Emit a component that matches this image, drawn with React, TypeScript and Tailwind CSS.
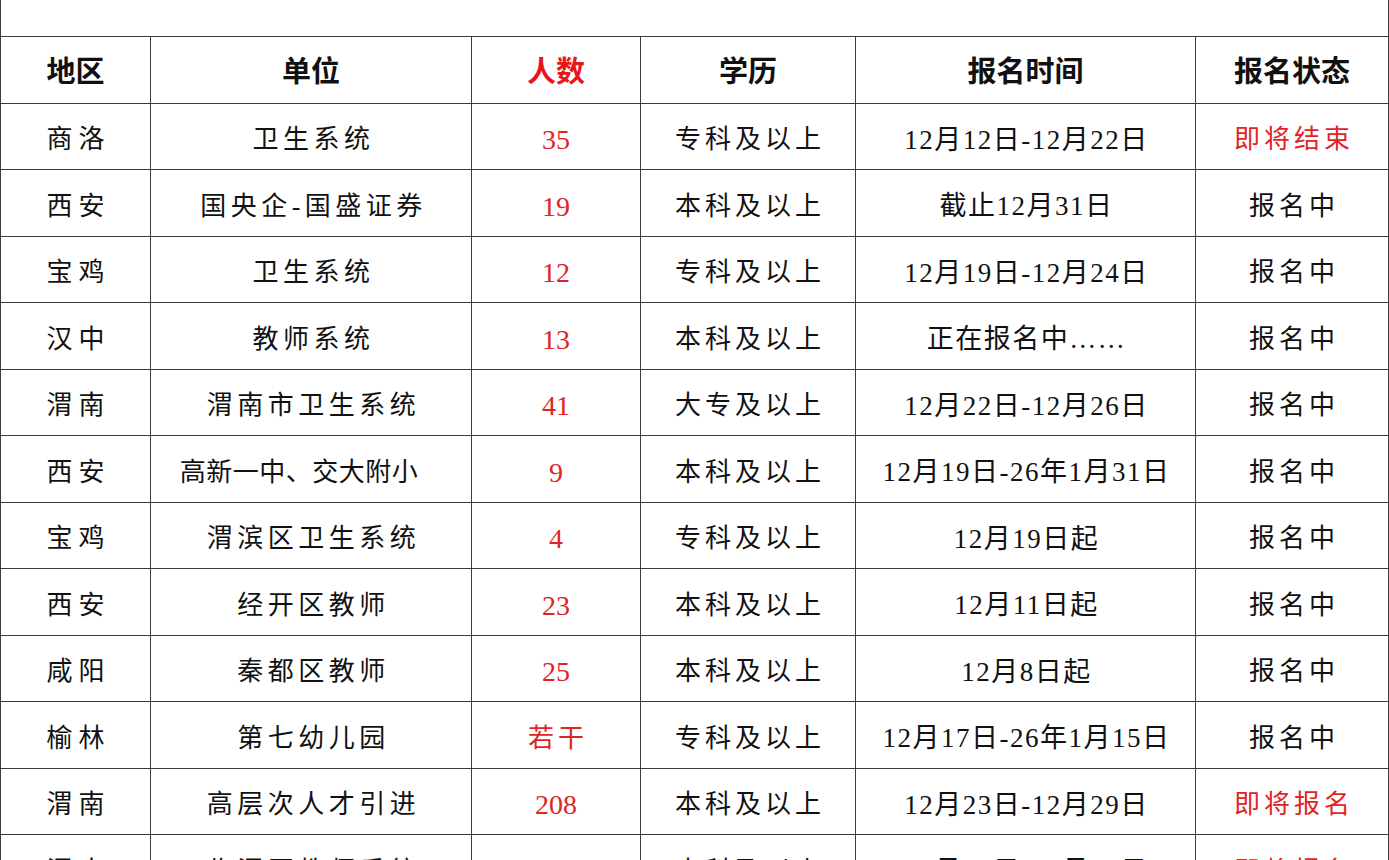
import React from "react";

type Row = {
  region: string;
  unit: string;
  unitTrack?: string;
  num: string;
  edu: string;
  date: string;
  status: string;
  statusRed?: boolean;
};

const rows: Row[] = [
  { region: "商洛", unit: "卫生系统", num: "35", edu: "专科及以上", date: "12月12日-12月22日", status: "即将结束", statusRed: true },
  { region: "西安", unit: "国央企-国盛证券", num: "19", edu: "本科及以上", date: "截止12月31日", status: "报名中" },
  { region: "宝鸡", unit: "卫生系统", num: "12", edu: "专科及以上", date: "12月19日-12月24日", status: "报名中" },
  { region: "汉中", unit: "教师系统", num: "13", edu: "本科及以上", date: "正在报名中……", status: "报名中" },
  { region: "渭南", unit: "渭南市卫生系统", num: "41", edu: "大专及以上", date: "12月22日-12月26日", status: "报名中" },
  { region: "西安", unit: "高新一中、交大附小", unitTrack: "tight", num: "9", edu: "本科及以上", date: "12月19日-26年1月31日", status: "报名中" },
  { region: "宝鸡", unit: "渭滨区卫生系统", num: "4", edu: "专科及以上", date: "12月19日起", status: "报名中" },
  { region: "西安", unit: "经开区教师", num: "23", edu: "本科及以上", date: "12月11日起", status: "报名中" },
  { region: "咸阳", unit: "秦都区教师", num: "25", edu: "本科及以上", date: "12月8日起", status: "报名中" },
  { region: "榆林", unit: "第七幼儿园", num: "若干", edu: "专科及以上", date: "12月17日-26年1月15日", status: "报名中" },
  { region: "渭南", unit: "高层次人才引进", num: "208", edu: "本科及以上", date: "12月23日-12月29日", status: "即将报名", statusRed: true },
  { region: "渭南", unit: "临渭区教师系统", num: "30", edu: "本科及以上", date: "12月25日-12月31日", status: "即将报名", statusRed: true },
];

const bodyFont = { fontFamily: '"Liberation Serif", "Noto Sans CJK SC", serif' };
const headFont = { fontFamily: '"Noto Sans CJK SC", "Liberation Sans", sans-serif' };

function Cell({
  children,
  last,
  className = "",
}: {
  children: React.ReactNode;
  last?: boolean;
  className?: string;
}) {
  return (
    <div
      className={
        "flex items-center justify-center border-l-[1.5px] border-[#3c3c3c] whitespace-nowrap " +
        (last ? "border-r-[1.5px] " : "") +
        className
      }
    >
      {children}
    </div>
  );
}

const grid =
  "grid grid-cols-[150px_321px_169px_215px_340px_194px] h-[66.5px] border-b-[1.5px] border-[#3c3c3c]";

export default function App() {
  return (
    <div className="w-[1389px] h-[860px] overflow-hidden bg-white text-[#111]">
      <div className="h-[37px] border-b-[1.5px] border-l-[1.5px] border-r-[1.5px] border-[#3c3c3c]" />
      <div className={grid} style={headFont}>
        <Cell className="text-[29px] font-bold leading-none">地区</Cell>
        <Cell className="text-[29px] font-bold leading-none">单位</Cell>
        <Cell className="text-[29px] font-bold leading-none text-[#e8151b]">人数</Cell>
        <Cell className="text-[29px] font-bold leading-none">学历</Cell>
        <Cell className="text-[29px] font-bold leading-none">报名时间</Cell>
        <Cell last className="text-[29px] font-bold leading-none">报名状态</Cell>
      </div>
      {rows.map((r, i) => (
        <div key={i} className={grid} style={bodyFont}>
          <Cell className="pt-[8px] pl-[6px] text-[26px] leading-none tracking-[6px]">{r.region}</Cell>
          <Cell
            className={
              "pt-[8px] text-[26px] leading-none " +
              (r.unitTrack === "tight" ? "tracking-[0.5px] pr-[24px]" : "pl-[5px] tracking-[4.5px]")
            }
          >
            {r.unit}
          </Cell>
          <Cell
            className={
              "pt-[8px] leading-none text-[#df2424] " +
              (/^\d+$/.test(r.num) ? "text-[28px]" : "text-[26px] pl-[4px] tracking-[4px]")
            }
          >
            {r.num}
          </Cell>
          <Cell className="pt-[8px] pl-[4px] text-[26px] leading-none tracking-[4px]">{r.edu}</Cell>
          <Cell className="pt-[8px] pl-[2px] text-[27px] leading-none tracking-[1.5px]">{r.date}</Cell>
          <Cell
            last
            className={
              "pt-[8px] pl-[4px] text-[26px] leading-none tracking-[4px] " +
              (r.statusRed ? "text-[#df2424]" : "")
            }
          >
            {r.status}
          </Cell>
        </div>
      ))}
    </div>
  );
}
